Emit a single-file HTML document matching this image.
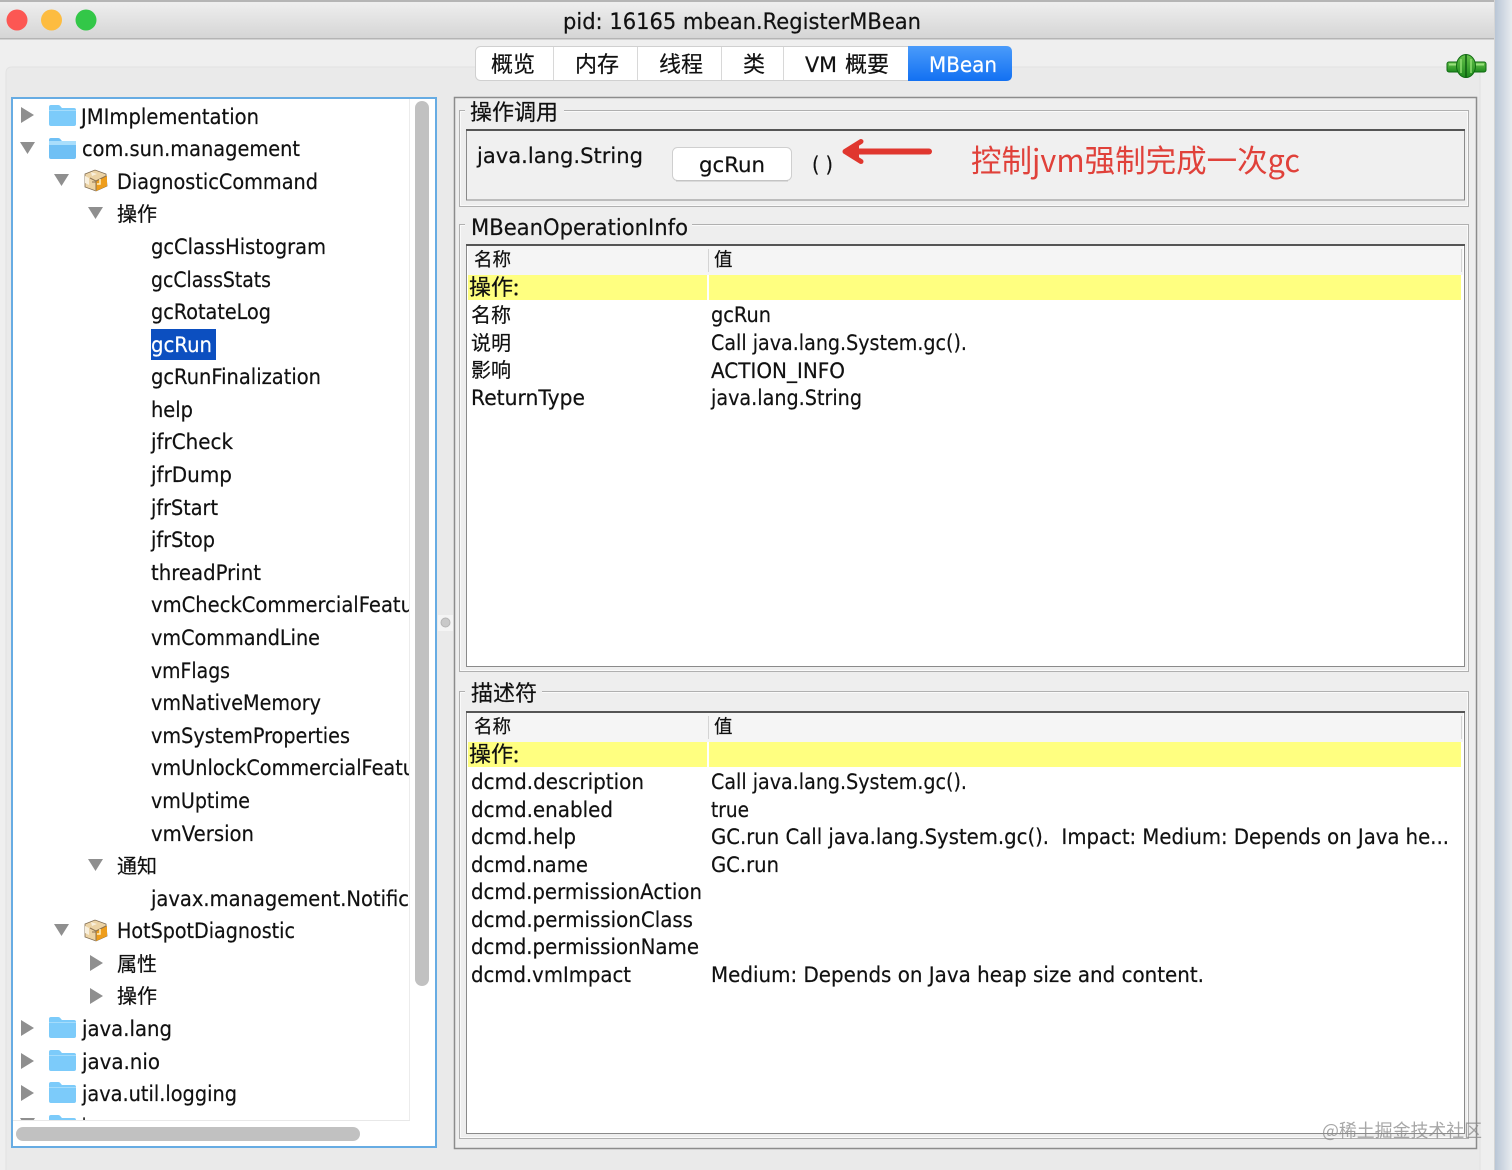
<!DOCTYPE html>
<html><head><meta charset="utf-8"><title>pid: 16165 mbean.RegisterMBean</title>
<style>
html,body{margin:0;padding:0;background:#ececec;width:1512px;height:1170px;overflow:hidden}
svg{display:block;filter:blur(.35px)}
text{font-family:"DejaVu Sans","Noto Sans CJK SC",sans-serif;font-size:21px;fill:#111;stroke:#111;stroke-width:.2}
.c{font-family:"Noto Sans CJK SC","WenQuanYi Zen Hei",sans-serif;font-size:20px}
</style></head><body>
<svg xmlns="http://www.w3.org/2000/svg" width="1512" height="1170" viewBox="0 0 1512 1170">
<defs>
<linearGradient id="tb" x1="0" y1="0" x2="0" y2="1"><stop offset="0" stop-color="#f0f0f0"/><stop offset="1" stop-color="#d4d4d4"/></linearGradient>
<linearGradient id="sh" x1="0" y1="0" x2="1" y2="0"><stop offset="0" stop-color="#b9c6d6"/><stop offset="1" stop-color="#e8ebef"/></linearGradient>
<linearGradient id="mb" x1="0" y1="0" x2="0" y2="1"><stop offset="0" stop-color="#4a9bfa"/><stop offset="1" stop-color="#1270f2"/></linearGradient>
<linearGradient id="pl" x1="0" y1="0" x2="0" y2="1"><stop offset="0" stop-color="#66c24a"/><stop offset="1" stop-color="#1d8a1d"/></linearGradient>
<clipPath id="tc"><rect x="13" y="99" width="396" height="1021"/></clipPath>
<g id="fc"><path d="M49 107q0-2 2-2h7q2 0 3 2l1 1h12q2 0 2 2v14q0 2-2 2H51q-2 0-2-2z" fill="#7ccbfa"/><rect x="49" y="110" width="27" height="1" fill="#a5dcfb"/></g>
<g id="fo"><path d="M49 107q0-2 2-2h7q2 0 3 2l1 1h12q2 0 2 2v14q0 2-2 2H51q-2 0-2-2z" fill="#6fc0f5"/><rect x="49" y="108" width="27" height="4" fill="#a9defc"/></g>
<path id="tr" d="M0 0L13 8L0 16z" fill="#8f8f8f"/>
<path id="td" d="M0 0H15L7.5 12z" fill="#8f8f8f"/>
<g id="bn"><path d="M85 174l10-4 11 4 1 12-11 5-11-4z" fill="#ecd3a5" stroke="#7d6a50" stroke-width=".8"/><path d="M96 181l11-5v10l-11 5z" fill="#ee9d1c"/><path d="M85 176l4 2v7l-4-2zM91 172l6 2-5 2z" fill="#f8efdc"/><path d="M90 178l6 3v9M96 181l10-5M92 182h4" fill="none" stroke="#8b7250" stroke-width="1"/><path d="M100 179v5h-3" fill="none" stroke="#fff0c0" stroke-width="1.500"/></g>
</defs>

<rect width="1512" height="1170" fill="#ececec"/>
<rect x="1495" width="17" height="1170" fill="url(#sh)"/>
<rect width="1495" height="39" fill="url(#tb)"/>
<rect width="1495" height="2" fill="#b5b5b5"/>
<rect y="38" width="1495" height="1.5" fill="#b4b4b4"/>
<rect y="39.5" width="1495" height="1130.5" fill="#efefef"/>
<rect x="1494" width="1" height="1170" fill="#d5d5d5"/>
<circle cx="17" cy="20" r="10.5" fill="#fc5753"/><circle cx="51.500" cy="20" r="10.500" fill="#fdbc40"/><circle cx="86" cy="20" r="10.500" fill="#33c748"/>
<text x="563" y="29" textLength="358" lengthAdjust="spacingAndGlyphs" style="font-size:22px">pid: 16165 mbean.RegisterMBean</text>

<!-- tabbed pane -->
<path d="M6 1170V73q0-6 6-6H1480V1170z" fill="#eaeaea"/>
<path d="M6 1170V73q0-6 6-6H1480V1170" fill="none" stroke="#e2e2e2"/>
<rect x="475.500" y="46.500" width="536" height="34" rx="5" fill="#fff" stroke="#d0d0d0"/>
<path d="M908 46h98q6 0 6 6v23q0 6-6 6h-98z" fill="url(#mb)"/>
<path d="M553.500 47v33M637.500 47v33M721.500 47v33M783.500 47v33" stroke="#d8d8d8"/>
<text class="c" x="491" y="72" style="font-size:22px">概览</text>
<text class="c" x="575" y="72" style="font-size:22px">内存</text>
<text class="c" x="659" y="72" style="font-size:22px">线程</text>
<text class="c" x="743" y="72" style="font-size:22px">类</text>
<text x="805" y="72" textLength="32" lengthAdjust="spacingAndGlyphs">VM</text>
<text class="c" x="845" y="72" style="font-size:22px">概要</text>
<text x="929" y="72" textLength="68" lengthAdjust="spacingAndGlyphs" style="fill:#fff;stroke:#fff">MBean</text>

<!-- connect plug -->
<rect x="1447" y="62" width="39" height="10" rx="2" fill="url(#pl)" stroke="#0f6a12"/>
<rect x="1449" y="63.500" width="35" height="2" fill="#9ae07f"/>
<ellipse cx="1466" cy="66" rx="9.500" ry="11.500" fill="url(#pl)" stroke="#0f6a12"/>
<path d="M1466 54.500v23" stroke="#0d5c10" stroke-width="1.500"/>
<path d="M1461 59v14M1471 59v14" stroke="#8ede70" stroke-width="1.500"/>

<!-- tree panel -->
<rect x="12" y="98" width="424" height="1049" fill="#fff" stroke="#67ace3" stroke-width="2"/>
<rect x="409" y="99" width="1" height="1021" fill="#ececec"/>
<rect x="13" y="1120" width="397" height="1" fill="#e8e8e8"/>
<rect x="415" y="101" width="14" height="885" rx="7" fill="#c1c1c1"/>
<rect x="16" y="1127" width="344" height="14" rx="7" fill="#c1c1c1"/>
<rect x="151" y="329" width="65" height="31" fill="#0c4fc0"/>

<g clip-path="url(#tc)">
<use href="#tr" x="21" y="107"/><use href="#fc"/>
<use href="#td" x="20" y="142"/><use href="#fo" y="33"/>
<use href="#td" x="54" y="174"/><use href="#bn"/>
<use href="#td" x="88" y="207"/>
<use href="#td" x="88" y="859"/>
<use href="#td" x="54" y="924"/><use href="#bn" y="750"/>
<use href="#tr" x="90" y="955"/>
<use href="#tr" x="90" y="988"/>
<use href="#tr" x="21" y="1020"/><use href="#fc" y="912"/>
<use href="#tr" x="21" y="1053"/><use href="#fc" y="945"/>
<use href="#tr" x="21" y="1085"/><use href="#fc" y="977"/>
<use href="#td" x="20" y="1118"/><use href="#fc" y="1010"/>

<text x="81" y="124" textLength="178" lengthAdjust="spacingAndGlyphs">JMImplementation</text>
<text x="82" y="156" textLength="218" lengthAdjust="spacingAndGlyphs">com.sun.management</text>
<text x="117" y="189" textLength="201" lengthAdjust="spacingAndGlyphs">DiagnosticCommand</text>
<text class="c" x="117" y="221">操作</text>
<text x="151" y="254" textLength="175" lengthAdjust="spacingAndGlyphs">gcClassHistogram</text>
<text x="151" y="287" textLength="120" lengthAdjust="spacingAndGlyphs">gcClassStats</text>
<text x="151" y="319" textLength="120" lengthAdjust="spacingAndGlyphs">gcRotateLog</text>
<text x="151" y="352" textLength="61" lengthAdjust="spacingAndGlyphs" style="fill:#fff;stroke:#fff">gcRun</text>
<text x="151" y="384" textLength="170" lengthAdjust="spacingAndGlyphs">gcRunFinalization</text>
<text x="151" y="417" textLength="42" lengthAdjust="spacingAndGlyphs">help</text>
<text x="151" y="449" textLength="82" lengthAdjust="spacingAndGlyphs">jfrCheck</text>
<text x="151" y="482" textLength="81" lengthAdjust="spacingAndGlyphs">jfrDump</text>
<text x="151" y="515" textLength="67" lengthAdjust="spacingAndGlyphs">jfrStart</text>
<text x="151" y="547" textLength="64" lengthAdjust="spacingAndGlyphs">jfrStop</text>
<text x="151" y="580" textLength="110" lengthAdjust="spacingAndGlyphs">threadPrint</text>
<text x="151" y="612" textLength="262" lengthAdjust="spacingAndGlyphs">vmCheckCommercialFeatu</text>
<text x="151" y="645" textLength="169" lengthAdjust="spacingAndGlyphs">vmCommandLine</text>
<text x="151" y="678" textLength="79" lengthAdjust="spacingAndGlyphs">vmFlags</text>
<text x="151" y="710" textLength="170" lengthAdjust="spacingAndGlyphs">vmNativeMemory</text>
<text x="151" y="743" textLength="199" lengthAdjust="spacingAndGlyphs">vmSystemProperties</text>
<text x="151" y="775" textLength="264" lengthAdjust="spacingAndGlyphs">vmUnlockCommercialFeatu</text>
<text x="151" y="808" textLength="99" lengthAdjust="spacingAndGlyphs">vmUptime</text>
<text x="151" y="841" textLength="103" lengthAdjust="spacingAndGlyphs">vmVersion</text>
<text class="c" x="117" y="873">通知</text>
<text x="151" y="906" textLength="258" lengthAdjust="spacingAndGlyphs">javax.management.Notific</text>
<text x="117" y="938" textLength="178" lengthAdjust="spacingAndGlyphs">HotSpotDiagnostic</text>
<text class="c" x="117" y="971">属性</text>
<text class="c" x="117" y="1003">操作</text>
<text x="82" y="1036" textLength="90" lengthAdjust="spacingAndGlyphs">java.lang</text>
<text x="82" y="1069" textLength="78" lengthAdjust="spacingAndGlyphs">java.nio</text>
<text x="82" y="1101" textLength="155" lengthAdjust="spacingAndGlyphs">java.util.logging</text>
<text x="82" y="1134" textLength="40" lengthAdjust="spacingAndGlyphs">javax</text>
</g>

<!-- splitter -->
<rect x="438" y="615" width="15" height="16" fill="#f4f4f4"/>
<circle cx="445.500" cy="622.500" r="4.500" fill="#c9c9c9" stroke="#b5b5b5"/>

<!-- right outer -->
<rect x="454.500" y="97.500" width="1022" height="1051" fill="#eeeeee" stroke="#8c8c8c" stroke-width="1.500"/>

<!-- fieldset 1 -->
<rect x="459.500" y="110.500" width="1009" height="96" fill="none" stroke="#b0b0b0"/>
<rect x="460.500" y="111.500" width="1007" height="94" fill="none" stroke="#fafafa"/>
<rect x="466.500" y="129.500" width="998" height="70.500" fill="#f0f0f0" stroke="#8a8a8a"/>
<rect x="466" y="129" width="999" height="2" fill="#555"/>
<rect x="465" y="100" width="99" height="24" fill="#eeeeee"/>
<text class="c" x="470" y="120" style="font-size:22px">操作调用</text>
<text x="477" y="163" textLength="166" lengthAdjust="spacingAndGlyphs">java.lang.String</text>
<rect x="672.500" y="147.500" width="119" height="33" rx="5" fill="#fff" stroke="#cfcfcf"/>
<rect x="676" y="180" width="112" height="1.500" fill="#c4c4c4"/>
<text x="699" y="172" textLength="66" lengthAdjust="spacingAndGlyphs">gcRun</text>
<text x="812" y="172" textLength="21" lengthAdjust="spacingAndGlyphs">( )</text>
<path d="M861 141.500L845 151.500L861 161.500" fill="none" stroke="#e0372f" stroke-width="5" stroke-linecap="round" stroke-linejoin="round"/>
<path d="M846 151.500L858 145V158z" fill="#e0372f" stroke="#e0372f" stroke-width="2" stroke-linejoin="round"/>
<path d="M856 151.500H929" stroke="#e0372f" stroke-width="6" stroke-linecap="round"/>
<text class="c" x="971" y="172" textLength="329" lengthAdjust="spacingAndGlyphs" style="font-size:31px;fill:#e0413a;stroke:none">控制jvm强制完成一次gc</text>

<!-- fieldset 2 -->
<rect x="459.500" y="224.500" width="1009" height="447" fill="none" stroke="#b0b0b0"/>
<rect x="460.500" y="225.500" width="1007" height="445" fill="none" stroke="#fafafa"/>
<rect x="465" y="214" width="227" height="24" fill="#eeeeee"/>
<text x="471" y="235" textLength="217" lengthAdjust="spacingAndGlyphs" style="font-size:22px">MBeanOperationInfo</text>
<rect x="466.500" y="244.500" width="998" height="422" fill="#fff" stroke="#8a8a8a"/>
<rect x="466" y="244" width="999" height="2" fill="#555"/>
<rect x="468" y="246" width="995" height="29" fill="#f5f5f5"/>
<rect x="708" y="249" width="1" height="23" fill="#d4d4d4"/>
<rect x="1461" y="249" width="1" height="23" fill="#d4d4d4"/>
<rect x="468" y="275" width="239" height="25" fill="#ffff80"/>
<rect x="709" y="275" width="752" height="25" fill="#ffff80"/>
<text class="c" x="474" y="266" style="font-size:18.500px">名称</text>
<text class="c" x="714" y="266" style="font-size:18.500px">值</text>
<text class="c" x="469" y="295" style="font-size:22px">操作:</text>
<text class="c" x="471" y="322">名称</text>
<text x="711" y="322" textLength="60" lengthAdjust="spacingAndGlyphs">gcRun</text>
<text class="c" x="471" y="350">说明</text>
<text x="711" y="350" textLength="256" lengthAdjust="spacingAndGlyphs">Call java.lang.System.gc().</text>
<text class="c" x="471" y="377">影响</text>
<text x="711" y="378" textLength="134" lengthAdjust="spacingAndGlyphs">ACTION_INFO</text>
<text x="471" y="405" textLength="114" lengthAdjust="spacingAndGlyphs">ReturnType</text>
<text x="711" y="405" textLength="151" lengthAdjust="spacingAndGlyphs">java.lang.String</text>

<!-- fieldset 3 -->
<rect x="459.500" y="691.500" width="1009" height="447" fill="none" stroke="#b0b0b0"/>
<rect x="460.500" y="692.500" width="1007" height="445" fill="none" stroke="#fafafa"/>
<rect x="465" y="681" width="77" height="24" fill="#eeeeee"/>
<text class="c" x="471" y="701" style="font-size:22px">描述符</text>
<rect x="466.500" y="711.500" width="998" height="422" fill="#fff" stroke="#8a8a8a"/>
<rect x="466" y="711" width="999" height="2" fill="#555"/>
<rect x="468" y="713" width="995" height="29" fill="#f5f5f5"/>
<rect x="708" y="716" width="1" height="23" fill="#d4d4d4"/>
<rect x="1461" y="716" width="1" height="23" fill="#d4d4d4"/>
<rect x="468" y="742" width="239" height="25" fill="#ffff80"/>
<rect x="709" y="742" width="752" height="25" fill="#ffff80"/>
<text class="c" x="474" y="733" style="font-size:18.500px">名称</text>
<text class="c" x="714" y="733" style="font-size:18.500px">值</text>
<text class="c" x="469" y="762" style="font-size:22px">操作:</text>
<text x="471" y="789" textLength="173" lengthAdjust="spacingAndGlyphs">dcmd.description</text>
<text x="711" y="789" textLength="256" lengthAdjust="spacingAndGlyphs">Call java.lang.System.gc().</text>
<text x="471" y="817" textLength="142" lengthAdjust="spacingAndGlyphs">dcmd.enabled</text>
<text x="711" y="817" textLength="38" lengthAdjust="spacingAndGlyphs">true</text>
<text x="471" y="844" textLength="105" lengthAdjust="spacingAndGlyphs">dcmd.help</text>
<text x="711" y="844" textLength="738" lengthAdjust="spacingAndGlyphs" xml:space="preserve">GC.run Call java.lang.System.gc().  Impact: Medium: Depends on Java he...</text>
<text x="471" y="872" textLength="117" lengthAdjust="spacingAndGlyphs">dcmd.name</text>
<text x="711" y="872" textLength="68" lengthAdjust="spacingAndGlyphs">GC.run</text>
<text x="471" y="899" textLength="231" lengthAdjust="spacingAndGlyphs">dcmd.permissionAction</text>
<text x="471" y="927" textLength="222" lengthAdjust="spacingAndGlyphs">dcmd.permissionClass</text>
<text x="471" y="954" textLength="228" lengthAdjust="spacingAndGlyphs">dcmd.permissionName</text>
<text x="471" y="982" textLength="160" lengthAdjust="spacingAndGlyphs">dcmd.vmImpact</text>
<text x="711" y="982" textLength="493" lengthAdjust="spacingAndGlyphs">Medium: Depends on Java heap size and content.</text>

<!-- watermark -->
<text class="c" x="1322" y="1137" textLength="160" lengthAdjust="spacingAndGlyphs" style="font-size:18px;fill:#8a8a8a;fill-opacity:.75;stroke:none">@稀土掘金技术社区</text>
</svg>
</body></html>
